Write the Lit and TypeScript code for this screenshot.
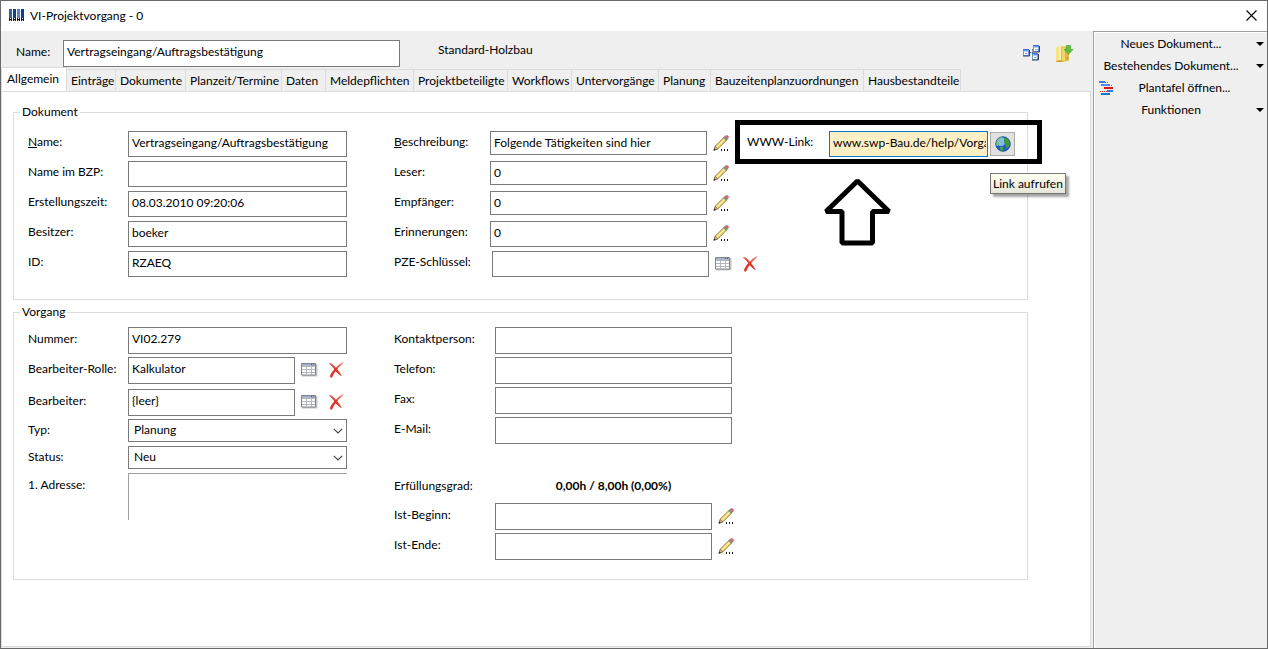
import { LitElement, html, css, svg, nothing } from "lit";
import { customElement, state } from "lit/decorators.js";

const pencil = svg`
  <path d="M1 15.3 2.4 11 11 2.4 13.6 5 5 13.7Z" fill="#f7dc7c" stroke="#8b6b2c" stroke-width=".9"/>
  <path d="M3.6 12.2 11.6 4.2" stroke="#fff3b8" stroke-width="1"/>
  <path d="M1 15.3 2.3 11.3 4.9 13.8Z" fill="#d9b98c" stroke="#6b5a48" stroke-width=".6"/>
  <path d="M.6 15.6 1.3 13.4 2.8 14.8Z" fill="#222"/>
  <path d="M10.6 2.8 11.8 1.6 14.4 4.2 13.2 5.4Z" fill="#7fa394" stroke="#4d6a60" stroke-width=".5"/>
  <path d="M12 1.5 13 .6Q14 .2 15 1 15.8 2 15.3 3L14.4 4Z" fill="#dc6a72" stroke="#b04a55" stroke-width=".5"/>
  <path d="M8 14h1v2H8zM11 14h1v2h-1zM14 14h1v2h-1z" fill="#111"/>`;

const table = svg`
  <path d="M1 2h15.500v12.500H1z" fill="#c3c5c8"/>
  <path d="M.5 1.500h14v11.500H.5z" fill="#fff" stroke="#7d858e"/>
  <path d="M1 2h13v2H1z" fill="#a9b4c4"/>
  <path d="M10 2.500h1M12 2.500h1" stroke="#3e5f96"/>
  <path d="M1 4.500h13M1 7.500h13M1 10.500h13M5.500 4v9M10.500 4v9" stroke="#b3b6ba"/>`;

const cross = svg`
  <path d="M.8 1.600C3 .6 5.500 2.600 8 5.800 10.500 3 13 .8 15.600 .5 13 3 10.800 5 9.200 7.300 11 9.600 13 12 14 14.300 11.500 13 9.500 11.200 7.700 9.300 6 11.500 4.800 13.500 4.200 15.600 3 16 1.800 15 2 14 2.800 11.600 4.500 9.300 6.300 7.300 4.600 5 3 3 .8 1.600Z" fill="#dd3522"/>
  <path d="M1.500 1.800C4 1.600 6 4 7.500 6M14.500 1.200C12 2.600 10.500 4 9 5.800" stroke="#f29a8a" fill="none" stroke-width=".8"/>`;

const globe = svg`
  <circle cx="8" cy="8" r="7.500" fill="#1f5fc0"/>
  <circle cx="6" cy="5.500" r="4.500" fill="#8fc4f4" opacity=".9"/>
  <path d="M1 7Q2 3 5 1.500L6.500 2 5 4 3.500 5.500 4 8 3 10 1.200 9.500Z" fill="#7cc878"/>
  <path d="M9 1.500Q13 2 15 6L14.500 9.500 12.500 12 11 11.500 10.500 8.500 9 7 9 4.500Z" fill="#3f9a3c"/>
  <path d="M5 11 7.500 10.500 8.500 13 7.500 15.300 5.500 14.500Z" fill="#4aa548"/>
  <circle cx="8" cy="8" r="7.300" fill="none" stroke="#1d4d96" stroke-width=".6"/>`;

const hierarchy = svg`
  <path d="M7 7.500h3M9.500 4v8.500" fill="none" stroke="#55657f" stroke-dasharray="1.500 1"/>
  <path d="M0 4h6v7H0zM10 0h6v7h-6zM9 8h6v7H9z" fill="#6d97e4"/>
  <path d="M1 6.500h4V10H1zM11 2.500h4V6h-4zM10 10.500h4V14h-4z" fill="#fff"/>
  <path d="M0 4.500h6M10 .5h6M9 8.500h6" stroke="#3f70d4"/>
  <path d="M0 11h6.500V5M10 7h6.500V1M9 15h6.500V9" fill="none" stroke="#33435e"/>
  <path d="M2 8.500h2.500M12 4.500h2.500M11 12.500h2.500" stroke="#8aa6d6"/>`;

const folder = svg`
  <path d="M0 2.500 4.500 0v14.500L.5 16.500 0 16Z" fill="#f7e384"/>
  <path d="M3.500 1 6 .5 6 15 3.500 15Z" fill="#fff6c4"/>
  <path d="M5 1.500h8v14L6 17H5Z" fill="#e0b93c"/>
  <path d="M6 2.500h3v13H6Z" fill="#f0d468"/>
  <path d="M0 16 5 15v2H1Z" fill="#c69a2a"/>
  <path d="M11.500 12v2" stroke="#5f9ccc" stroke-width="1.200"/>
  <path d="M10.500.5h4v4H17l-4.500 4.700L8 4.500h2.500Z" fill="#5cc43a" stroke="#3c9a28" stroke-width=".6"/>`;

const gantt = svg`
  <path d="M0 1h6" stroke="#3f7df0" stroke-width="2"/>
  <path d="M2 4h9" stroke="#4c8cf5" stroke-width="2"/>
  <path d="M5 7h9" stroke="#e01010" stroke-width="2"/>
  <path d="M8 10h6" stroke="#1f7fe8" stroke-width="2"/>
  <path d="M2 13h9" stroke="#0a78d8" stroke-width="2"/>
  <path d="M6 1.500h4M10 4.500h4M1 10.500h7" stroke="#e33" stroke-dasharray="1 1"/>`;

const logo = svg`
  <path d="M0 0h3v12H0z" fill="#2f6494"/>
  <path d="M8 0h3v12H8z" fill="#5b86c4"/>
  <path d="M4 0h3v12H4zM12 0h3v12h-3z" fill="#123c8c"/>
  <path d="M0 9h3v3H0zM4 9h3v3H4zM8 9h3v3H8zM12 9h3v3h-3z" fill="#0b1830"/>
  <path d="M1 9h1v1H1zM5 9h1v1H5zM9 9h1v1H9zM13 9h1v1h-1z" fill="#fff"/>
  <path d="M1 11h1v1H1zM5 11h1v1H5zM9 11h1v1H9zM13 11h1v1h-1z" fill="#b9c6da"/>`;

const icon = (shape: unknown, w = 17, h = 17) =>
  html`<svg class="icon" width=${w} height=${h} viewBox="0 0 ${w} ${h}" aria-hidden="true">${shape}</svg>`;

type Action = "edit" | "pick";
interface Field {
  id: string;
  label: string;
  key?: boolean;
  value?: string;
  size?: string;
  actions?: Action;
}

const documentFields: Field[] = [
  { id: "d-name", label: "Name:", key: true, value: "Vertragseingang/Auftragsbestätigung" },
  { id: "d-bzp", label: "Name im BZP:" },
  { id: "d-created", label: "Erstellungszeit:", value: "08.03.2010 09:20:06" },
  { id: "d-owner", label: "Besitzer:", value: "boeker" },
  { id: "d-id", label: "ID:", value: "RZAEQ" },
];

const accessFields: Field[] = [
  { id: "a-desc", label: "Beschreibung:", key: true, value: "Folgende Tätigkeiten sind hier", actions: "edit", size: "low" },
  { id: "a-read", label: "Leser:", value: "0", actions: "edit", size: "low" },
  { id: "a-recv", label: "Empfänger:", value: "0", actions: "edit", size: "low" },
  { id: "a-remind", label: "Erinnerungen:", value: "0", actions: "edit" },
  { id: "a-pze", label: "PZE-Schlüssel:", actions: "pick", size: "key" },
];

const contactFields: Field[] = [
  { id: "c-person", label: "Kontaktperson:" },
  { id: "c-phone", label: "Telefon:" },
  { id: "c-fax", label: "Fax:" },
  { id: "c-mail", label: "E-Mail:" },
];

const tabs = [
  "Allgemein", "Einträge", "Dokumente", "Planzeit/Termine", "Daten", "Meldepflichten",
  "Projektbeteiligte", "Workflows", "Untervorgänge", "Planung", "Bauzeitenplanzuordnungen",
  "Hausbestandteile",
];

@customElement("app-root")
export class AppRoot extends LitElement {
  static styles = css`
    :host {
      display: block;
      font: 12px/16px Lato, "Noto Sans", sans-serif;
      color: #000;
    }
    * { box-sizing: border-box; }
    button, input, select, textarea { font: inherit; color: inherit; margin: 0; border-radius: 0; }
    button { border: 0; padding: 0; background: none; }
    .icon { display: block; flex: none; overflow: visible; }
    .window {
      min-height: 100vh;
      display: flex;
      flex-direction: column;
      border: 1px solid #696969;
      background: #efefef;
    }
    .titlebar {
      display: flex;
      align-items: center;
      gap: 6px;
      height: 30px;
      padding: 0 10px 2px 8px;
      background: #fff;
    }
    .title { flex: 1; margin: 0; padding-top: 2px; font-size: inherit; font-weight: 400; }
    .body { flex: 1; display: flex; }
    .main { flex: 1; min-width: 0; display: flex; flex-direction: column; padding: 0 2px 1px 0; }
    .header { display: flex; align-items: center; height: 36px; padding: 0 18px 0 15px; }
    .header-name { width: 47px; padding-top: 6px; }
    .header .header-input { flex: none; width: 337px; height: 27px; margin-top: 8px; }
    .header-type { flex: 1; padding: 2px 0 0 38px; }
    .header-tools { display: flex; gap: 16px; padding-top: 8px; }

    .tabs {
      display: grid;
      grid-template-columns: 66px 49px 70px 96px 44px 88px 94px 64px 87px 52px 153px 97px;
      align-items: end;
    }
    .tab {
      height: 22px;
      padding: 0 0 0 4px;
      text-align: left;
      white-space: nowrap;
      border: solid #dcdcdc;
      border-width: 1px 1px 0 0;
    }
    .tab-active {
      height: 25px;
      padding: 0 0 3px 5px;
      margin-bottom: -1px;
      background: #fff;
      border-left-width: 1px;
    }
    .sheet {
      flex: 1;
      display: flex;
      flex-direction: column;
      gap: 4px;
      padding: 12px 62px 16px 11px;
      background: #fff;
      border: 1px solid #dcdcdc;
    }
    .group {
      display: grid;
      grid-template-columns: minmax(0, 366fr) minmax(0, 353fr) minmax(0, 280fr);
      align-items: start;
      min-width: 0;
      margin: 0;
      padding: 11px 0 22px 14px;
      border: 1px solid #dcdcdc;
    }
    .group-task { padding: 7px 0 19px 14px; }
    .legend { padding: 0 2px; margin-left: -8px; line-height: 16px; }

    .stack { display: flex; flex-direction: column; gap: 4px; }
    .stack-left { padding-right: 47px; }
    .stack-access { padding-right: 18px; }
    .stack-contact { padding-right: 15px; }
    .stack-task, .stack-contact { gap: 3px; }
    .row { display: flex; align-items: flex-start; min-height: 26px; }
    .label { flex: none; width: 100px; padding-top: 3px; }
    .group-task .label { padding-top: 4px; }
    .stack-access .label { width: 96px; }
    .stack-contact .label { width: 101px; }
    .input {
      flex: 1;
      min-width: 0;
      height: 26px;
      padding: 0 1px 4px 3px;
      background: #fff;
      border: 1px solid #7a7a7a;
      outline: 0;
    }
    .input-low { height: 24px; padding-bottom: 2px; }
    .stack-access .label-key { width: 98px; }
    .tall { height: 27px; }
    .spaced { margin-bottom: 2px; }
    .actions { display: flex; gap: 10px; padding: 5px 0 0 6px; }
    .stack-access .actions-edit { width: 22px; flex: none; padding-top: 4px; }
    .stack-access .actions-pick { width: 20px; flex: none; }
    .stack-contact .actions-edit { margin-right: -3px; }
    .actions-pick { padding-right: 2px; }

    .select-box { flex: 1; display: grid; align-items: center; }
    .select {
      grid-area: 1 / 1;
      width: 100%;
      height: 23px;
      padding: 0 20px 2px 5px;
      appearance: none;
      background: #fff;
      border: 1px solid #7a7a7a;
    }
    .chevron { grid-area: 1 / 1; justify-self: end; margin-right: 4px; pointer-events: none; }
    .row-select { min-height: 24px; }
    .stack-task .row-select .label { padding-top: 3px; }
    .area {
      flex: 1;
      min-width: 0;
      height: 47px;
      border: solid #a0a0a0;
      border-width: 1px 0 0 1px;
      background: #fff;
      resize: none;
      outline: 0;
    }
    .progress { margin-top: 24px; min-height: 29px; align-items: center; }
    .stack-contact .progress .label { padding: 0; }
    .progress-value { flex: 1; text-align: center; font-weight: 700; }

    .link-row { position: relative; padding-right: 12px; }
    .link-row .label { width: 82px; }
    .link-input { background: #ffefc4; border-color: #0078d7; }
    .link-button {
      display: grid;
      place-items: center;
      width: 25px;
      height: 24px;
      margin: 1px 0 0 2px;
      background: #e1e1e1;
      border: 1px solid #adadad;
    }
    .mark { position: absolute; inset: -11px -15px -7px -12px; border: 5px solid #000; pointer-events: none; }
    .pointer { position: absolute; left: 75px; top: 45px; pointer-events: none; }
    .tooltip {
      position: absolute;
      top: 42px;
      left: 243px;
      padding: 2px 2px 1px;
      white-space: nowrap;
      background: linear-gradient(#fffff0, #e6e6dc);
      border: 1px solid #767676;
      box-shadow: 3px 3px 2px rgba(0, 0, 0, 0.35);
    }

    .side {
      width: 174px;
      flex: none;
      display: flex;
      flex-direction: column;
      padding: 1px 0 0 1px;
      border: solid #a0a0a0;
      border-width: 1px 0 0 1px;
      box-shadow: inset 1px 1px #fff;
    }
    .command {
      display: grid;
      grid-template-columns: 1fr 20px;
      align-items: center;
      height: 22px;
      padding-bottom: 1px;
      white-space: nowrap;
    }
    .drop { justify-self: end; margin-right: 3px; }
    .command-icon { grid-template-columns: 15px 1fr; padding: 0 12px 1px 4px; }
  `;

  @state() private tab = "Allgemein";

  private label(f: Field) {
    return html`<label class="label ${f.size === "key" ? "label-key" : ""}" for=${f.id}
      >${f.key ? html`<u>${f.label[0]}</u>${f.label.slice(1)}` : f.label}</label>`;
  }

  private actions(f: Field) {
    if (f.actions === "edit") {
      return html`<span class="actions actions-edit">
        <button aria-label="${f.label} bearbeiten">${icon(pencil)}</button></span>`;
    }
    if (f.actions === "pick") {
      return html`<span class="actions actions-pick">
        <button aria-label="${f.label} auswählen">${icon(table)}</button>
        <button aria-label="${f.label} löschen">${icon(cross)}</button></span>`;
    }
    return nothing;
  }

  private row(f: Field, size = "") {
    return html`<div class="row ${f.size === "spaced" ? "spaced" : ""}">
      ${this.label(f)}
      <input class="input ${f.size === "low" ? "input-low" : ""} ${size}" id=${f.id} .value=${f.value ?? ""} />
      ${this.actions(f)}
    </div>`;
  }

  private select(id: string, label: string, value: string) {
    return html`<div class="row row-select">
      <label class="label" for=${id}>${label}</label>
      <span class="select-box">
        <select class="select" id=${id}><option>${value}</option></select>
        <svg class="chevron" width="10" height="6" viewBox="0 0 10 6" aria-hidden="true">
          <path d="M.8.8 5 5 9.200.8" fill="none" stroke="#444" stroke-width="1.100" />
        </svg>
      </span>
    </div>`;
  }

  private command(text: string) {
    return html`<button class="command">
      <span>${text}</span>
      <svg class="drop" width="8" height="4" viewBox="0 0 8 4" aria-hidden="true"><path d="M0 0h8L4 4Z" /></svg>
    </button>`;
  }

  render() {
    return html`<div class="window">
      <header class="titlebar">
        ${icon(logo, 15, 12)}
        <h1 class="title">VI-Projektvorgang - 0</h1>
        <button aria-label="Schließen">
          <svg class="icon" width="11" height="11" viewBox="0 0 11 11">
            <path d="M.5.5l10 10M10.500.5l-10 10" stroke="#000" stroke-width="1.100" />
          </svg>
        </button>
      </header>
      <div class="body">
        <main class="main">
          <div class="header">
            <label class="header-name" for="h-name">Name:</label>
            <input class="input header-input" id="h-name" .value=${"Vertragseingang/Auftragsbestätigung"} />
            <span class="header-type">Standard-Holzbau</span>
            <span class="header-tools">
              <button aria-label="Struktur">${icon(hierarchy)}</button>
              <button aria-label="Ablegen">${icon(folder)}</button>
            </span>
          </div>
          <div class="tabs" role="tablist">
            ${tabs.map((t) => html`<button
              class="tab ${t === this.tab ? "tab-active" : ""}"
              role="tab"
              aria-selected=${t === this.tab ? "true" : "false"}
              @click=${() => (this.tab = t)}
            >${t}</button>`)}
          </div>
          <div class="sheet">
            <fieldset class="group">
              <legend class="legend">Dokument</legend>
              <div class="stack stack-left">${documentFields.map((f) => this.row(f))}</div>
              <div class="stack stack-access">${accessFields.map((f) => this.row(f))}</div>
              <div class="row link-row">
                <label class="label" for="www">WWW-Link:</label>
                <input class="input link-input" id="www" .value=${"www.swp-Bau.de/help/Vorgang"} />
                <button class="link-button" aria-label="Link aufrufen">${icon(globe, 16, 16)}</button>
                <span class="mark"></span>
                <svg class="pointer" width="70" height="72" viewBox="0 0 70 72" aria-hidden="true">
                  <path d="M35.500 5 4 35.500H20V67H50.500V35.500H67Z" fill="#fff" stroke="#000" stroke-width="5" stroke-linejoin="bevel" />
                </svg>
                <span class="tooltip" role="tooltip">Link aufrufen</span>
              </div>
            </fieldset>
            <fieldset class="group group-task">
              <legend class="legend">Vorgang</legend>
              <div class="stack stack-left stack-task">
                ${this.row({ id: "t-no", label: "Nummer:", value: "VI02.279" }, "tall")}
                ${this.row({ id: "t-role", label: "Bearbeiter-Rolle:", value: "Kalkulator", actions: "pick", size: "spaced" }, "tall")}
                ${this.row({ id: "t-user", label: "Bearbeiter:", value: "{leer}", actions: "pick" }, "tall")}
                ${this.select("t-type", "Typ:", "Planung")}
                ${this.select("t-state", "Status:", "Neu")}
                <div class="row">
                  <label class="label" for="t-addr">1. Adresse:</label>
                  <textarea class="area" id="t-addr"></textarea>
                </div>
              </div>
              <div class="stack stack-contact">
                ${contactFields.map((f) => this.row(f, "tall"))}
                <div class="row progress">
                  <span class="label">Erfüllungsgrad:</span>
                  <span class="progress-value">0,00h / 8,00h (0,00%)</span>
                </div>
                ${this.row({ id: "i-start", label: "Ist-Beginn:", actions: "edit" }, "tall")}
                ${this.row({ id: "i-end", label: "Ist-Ende:", actions: "edit" }, "tall")}
              </div>
            </fieldset>
          </div>
        </main>
        <nav class="side">
          ${this.command("Neues Dokument...")}
          ${this.command("Bestehendes Dokument...")}
          <button class="command command-icon">${icon(gantt, 14, 14)}<span>Plantafel öffnen...</span></button>
          ${this.command("Funktionen")}
        </nav>
      </div>
    </div>`;
  }
}
